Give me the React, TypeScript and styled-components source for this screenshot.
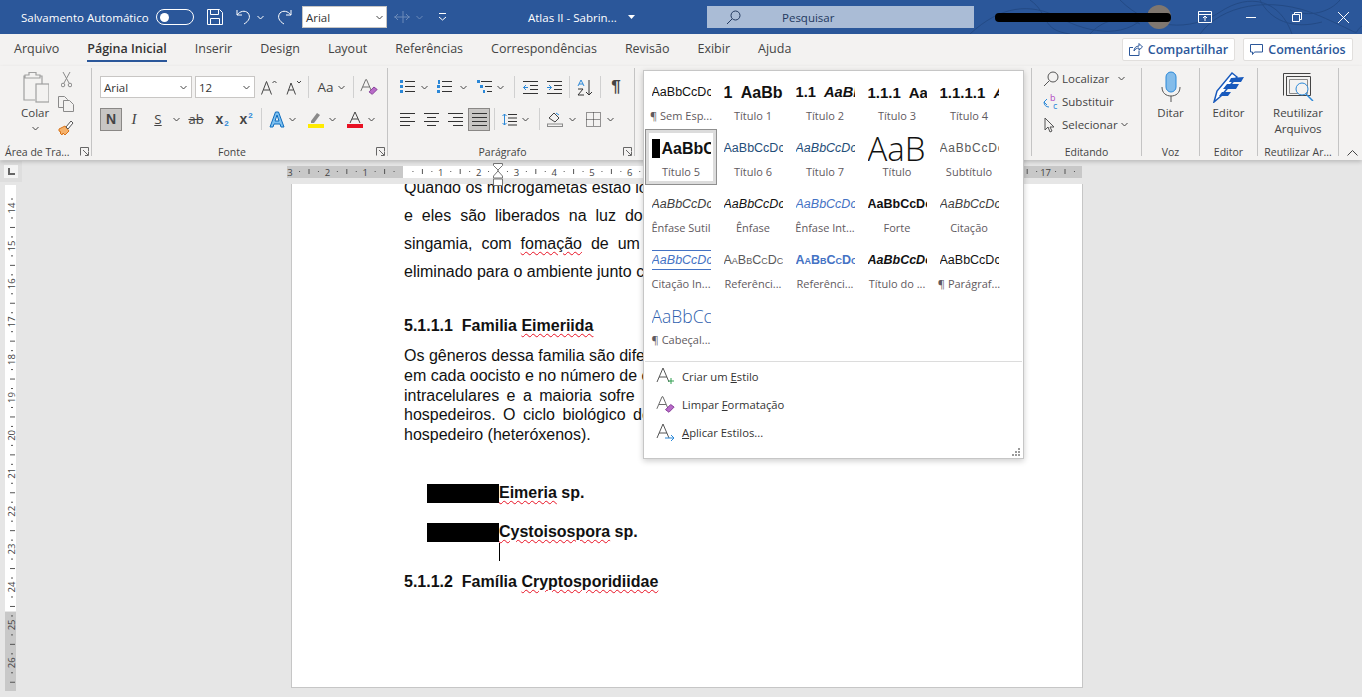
import React from 'react'
import styled, { createGlobalStyle } from 'styled-components'

const UI = `"Open Sans", "Noto Sans", sans-serif`
const DOC = `"Liberation Sans", Arial, sans-serif`

const Global = createGlobalStyle`
  html, body { margin: 0; padding: 0; height: 100%; overflow: hidden; }
  body { background: #e6e6e6; font-family: ${UI}; }
  * { box-sizing: border-box; }
  svg { display: block; flex: none; }
`

const Shell = styled.div`
  position: relative;
  width: 1362px;
  height: 697px;
  overflow: hidden;
  display: flex;
  flex-direction: column;
`

/* title bar */
const TitleBar = styled.header`
  position: relative;
  height: 34px;
  flex: none;
  background: #2b579a;
  color: #fff;
  display: flex;
  align-items: center;
  padding-left: 21px;
  font-size: 11.5px;
  overflow: hidden;
`
const Swirls = styled.svg`
  position: absolute;
  right: 0;
  top: 0;
`
const AutoSave = styled.span`
  width: 135px;
  white-space: nowrap;
  position: relative;
`
const Toggle = styled.span`
  width: 38px;
  height: 16px;
  border: 1.5px solid #fff;
  border-radius: 8px;
  display: flex;
  align-items: center;
  padding-left: 3px;
  margin-right: 13px;
  &::before {
    content: '';
    width: 9px;
    height: 9px;
    border-radius: 50%;
    background: #fff;
  }
`
const QuickBtn = styled.span<{ $w: number; $ml?: number; $faded?: boolean }>`
  width: ${p => p.$w}px;
  height: 20px;
  flex: none;
  margin-left: ${p => p.$ml || 0}px;
  display: flex;
  align-items: center;
  justify-content: center;
  opacity: ${p => (p.$faded ? 0.3 : 1)};
`
const FontBox = styled.div`
  width: 85px;
  height: 22px;
  background: #fff;
  border: 1px solid #c8c6c4;
  color: #333;
  display: flex;
  align-items: center;
  justify-content: space-between;
  padding: 0 3px;
  font-size: 11.5px;
  margin: 0 6px 0 10px;
`
const DocTitle = styled.div`
  width: 179px;
  margin-left: 68px;
  display: flex;
  align-items: center;
  gap: 11px;
  white-space: nowrap;
  position: relative;
`
const SearchBox = styled.div`
  width: 267px;
  height: 22px;
  background: #aabcd6;
  color: #23395f;
  display: flex;
  align-items: center;
  padding-left: 19px;
  gap: 41px;
  font-size: 11.5px;
  position: relative;
`
const AccountBar = styled.div`
  position: relative;
  width: 176px;
  height: 9px;
  margin-left: 21px;
  flex: none;
  &::after {
    content: '';
    position: absolute;
    inset: 0;
    background: #000;
    border-radius: 4px;
  }
`
const Avatar = styled.span`
  position: absolute;
  right: 0;
  top: -8px;
  width: 24px;
  height: 24px;
  border-radius: 50%;
  background: #7f7770;
`
const WindowBtns = styled.div`
  margin-left: auto;
  margin-right: -4px;
  display: flex;
  align-items: center;
  position: relative;
`
const WindowBtn = styled.span`
  width: 46px;
  height: 34px;
  display: flex;
  align-items: center;
  justify-content: center;
`

/* tab row */
const TabRow = styled.nav`
  height: 32px;
  flex: none;
  background: #f3f2f1;
  display: flex;
  align-items: center;
  padding: 0 9px 2px 14px;
  font-size: 12.5px;
  color: #444;
`
const Tabs = styled.div`
  display: flex;
  gap: 28px;
  align-items: center;
  height: 100%;
`
const Tab = styled.span<{ $active?: boolean }>`
  position: relative;
  height: 18px;
  line-height: 18px;
  white-space: nowrap;
  font-weight: ${p => (p.$active ? 600 : 400)};
  color: ${p => (p.$active ? '#333' : '#444')};
  ${p =>
    p.$active &&
    `&::after {
      content: '';
      position: absolute;
      left: 0;
      right: 0;
      bottom: -4px;
      height: 2px;
      background: #2b579a;
    }`}
`
const TabActions = styled.div`
  margin-left: auto;
  display: flex;
  gap: 8px;
`
const ActionBtn = styled.span<{ $w: number }>`
  width: ${p => p.$w}px;
  height: 23px;
  background: #fff;
  border: 1px solid #e1dfdd;
  border-radius: 2px;
  color: #2b579a;
  font-weight: 600;
  display: flex;
  align-items: center;
  justify-content: center;
  gap: 5px;
  font-size: 12.5px;
`

/* ribbon */
const Ribbon = styled.section`
  height: 94px;
  flex: none;
  background: #f3f2f1;
  display: flex;
  padding-top: 2px;
  position: relative;
  z-index: 2;
  box-shadow: 0 2px 4px rgba(0, 0, 0, 0.18);
`
const Group = styled.div<{ $w: number }>`
  width: ${p => p.$w}px;
  flex: none;
  height: 88px;
  border-right: 1px solid #c4c4c4;
  display: flex;
  flex-direction: column;
  position: relative;
`
const GroupBody = styled.div`
  flex: 1;
  display: flex;
  min-height: 0;
`
const GroupLabel = styled.div<{ $pr?: number; $left?: boolean }>`
  height: 16px;
  margin-bottom: -4px;
  padding-right: ${p => p.$pr || 0}px;
  padding-left: ${p => (p.$left ? 5 : 0)}px;
  font-size: 10.5px;
  line-height: 16px;
  text-align: ${p => (p.$left ? 'left' : 'center')};
  color: #444;
  white-space: nowrap;
`
const Launcher = styled.span`
  position: absolute;
  right: 2px;
  bottom: 0;
`
const ToolColumn = styled.div<{ $pad?: string; $gap?: number }>`
  display: flex;
  flex-direction: column;
  padding: ${p => p.$pad || '0'};
  gap: ${p => p.$gap || 0}px;
`
const EditColumn = styled(ToolColumn)`
  margin-top: -1px;
`
const ToolRow = styled.div<{ $gap?: number; $h?: number }>`
  display: flex;
  align-items: center;
  gap: ${p => p.$gap || 0}px;
  height: ${p => p.$h || 24}px;
`
const Combo = styled.span<{ $w: number }>`
  width: ${p => p.$w}px;
  height: 22px;
  background: #fff;
  border: 1px solid #c8c6c4;
  display: flex;
  align-items: center;
  justify-content: space-between;
  padding: 0 4px 0 3px;
  font-size: 11.5px;
  color: #333;
`
const ToolBtn = styled.span<{ $w?: number; $ml?: number; $gap?: number; $pressed?: boolean }>`
  width: ${p => p.$w || 20}px;
  height: 23px;
  margin-left: ${p => p.$ml || 0}px;
  flex: none;
  display: flex;
  align-items: center;
  justify-content: center;
  gap: ${p => p.$gap || 0}px;
  font-size: 13.5px;
  color: #444;
  ${p => p.$pressed && 'background: #c8c6c4; border: 1px solid #8a8886;'}
`
const BoldBtn = styled(ToolBtn)`
  font-family: ${DOC};
  font-weight: 700;
  font-size: 14px;
`
const ItalicBtn = styled(ToolBtn)`
  font-family: "Liberation Serif", serif;
  font-style: italic;
  font-size: 15px;
`
const UnderBtn = styled(ToolBtn)`
  text-decoration: underline;
`
const StrikeBtn = styled(ToolBtn)`
  text-decoration: line-through;
  font-size: 13px;
`
const ScriptMark = styled.span<{ $up?: boolean }>`
  font-size: 8px;
  color: #2b88d8;
  font-weight: 700;
  align-self: ${p => (p.$up ? 'flex-start' : 'flex-end')};
  margin: ${p => (p.$up ? '3px' : '0')} 0 ${p => (p.$up ? '0' : '3px')} 1px;
`
const PilcrowBtn = styled(ToolBtn)`
  font-size: 17px;
  font-weight: 700;
  font-family: ${DOC};
`
const Divider = styled.span<{ $ml?: number }>`
  width: 1px;
  height: 22px;
  margin-left: ${p => p.$ml || 0}px;
  background: #d0d0d0;
  flex: none;
`
const BigTool = styled.div`
  flex: 1;
  display: flex;
  flex-direction: column;
  align-items: center;
  font-size: 11.5px;
  line-height: 16px;
  color: #444;
  padding-top: 1px;
  text-align: center;
  white-space: nowrap;
`
const PasteTool = styled(BigTool)`
  flex: none;
  padding-top: 0;
`
const ChevSlot = styled.span`
  margin-top: 5px;
`
const BigIcon = styled.span`
  height: 35px;
  margin-bottom: 1px;
  display: flex;
  align-items: center;
  justify-content: center;
`
const EditLine = styled.div`
  height: 23px;
  display: flex;
  align-items: center;
  gap: 3px;
  font-size: 11.5px;
  color: #444;
  white-space: nowrap;
`
const FindText = styled.span`
  width: 53px;
`
const Collapse = styled.span`
  position: absolute;
  right: 4px;
  bottom: 4px;
`

/* workspace */
const Workspace = styled.div`
  flex: 1;
  min-height: 0;
  background: #e6e6e6;
  display: flex;
  flex-direction: column;
  position: relative;
`
const RulerRow = styled.div`
  height: 24px;
  flex: none;
  display: flex;
  align-items: center;
  position: relative;
  padding-left: 287px;
`
const TabStop = styled.span`
  position: absolute;
  left: 0;
  top: 1px;
  width: 22px;
  height: 21px;
  background: #dedede;
  display: flex;
  align-items: center;
  justify-content: center;
  &::before {
    content: '';
    width: 14px;
    height: 13px;
    background: #f4f4f4;
    position: absolute;
  }
`
const TabGlyph = styled.svg`
  position: relative;
`
const Indent = styled.svg`
  position: absolute;
  left: 493px;
  top: 3px;
`
const DeskRow = styled.div`
  flex: 1;
  min-height: 0;
  display: flex;
  padding-bottom: 9px;
`
const SideRuler = styled.div`
  width: 291px;
  flex: none;
  padding-left: 5px;
`
const Page = styled.main`
  width: 792px;
  height: 504px;
  flex: none;
  background: #fff;
  border: 1px solid #c6c6c6;
  border-top: none;
  overflow: hidden;
  padding: 0 112px;
  font-family: ${DOC};
  font-size: 16px;
  color: #111;
`
const Para = styled.div<{ $lh: number; $top?: number }>`
  line-height: ${p => p.$lh}px;
  margin-top: ${p => p.$top || 0}px;
  white-space: nowrap;
`
const Line = styled.div<{ $ws?: number }>`
  word-spacing: ${p => p.$ws || 0}px;
`
const Heading = styled.div<{ $top: number }>`
  font-weight: 700;
  margin-top: ${p => p.$top}px;
  line-height: 20px;
  white-space: pre;
`
const Typo = styled.span`
  text-decoration: underline wavy #e81123 1px;
  text-underline-offset: 2px;
`
const ListItem = styled.div<{ $top: number }>`
  display: flex;
  align-items: center;
  margin: ${p => p.$top}px 0 0 23px;
  font-weight: 700;
  height: 19px;
  white-space: pre;
`
const Redact = styled.span`
  width: 72px;
  height: 19px;
  background: #000;
  flex: none;
`
const Caret = styled.div`
  width: 1px;
  height: 18px;
  margin: 1px 0 0 95px;
  background: #000;
`

/* style gallery */
const Gallery = styled.div`
  position: absolute;
  left: 643px;
  top: 70px;
  width: 381px;
  height: 389px;
  background: #fff;
  border: 1px solid #c6c6c6;
  box-shadow: 0 2px 6px rgba(0, 0, 0, 0.2);
  z-index: 5;
  display: flex;
  flex-direction: column;
`
const StyleGrid = styled.div`
  display: grid;
  grid-template-columns: repeat(5, 72px);
  grid-auto-rows: 56px;
  padding: 2px 0 0 1px;
  height: 290px;
`
const StyleCell = styled.div<{ $selected?: boolean }>`
  display: flex;
  flex-direction: column;
  align-items: center;
  padding: 5px 6px 0;
  overflow: hidden;
  ${p => p.$selected && 'outline: 1px solid #8f8f8f; outline-offset: -1px; border: 4px solid #dcdcdc; padding: 1px 2px 0;'}
`
type PreviewProps = {
  $size?: number
  $bold?: boolean
  $italic?: boolean
  $color?: string
  $ws?: number
  $lines?: boolean
  $caps?: boolean
  $thin?: boolean
  $clip?: number
}
const Preview = styled.div<PreviewProps>`
  width: 59px;
  height: 29px;
  overflow: hidden;
  white-space: pre;
  font-family: ${p => (p.$thin ? UI : DOC)};
  font-size: ${p => p.$size || 12.5}px;
  font-weight: ${p => (p.$bold ? 700 : p.$thin ? 300 : 400)};
  font-style: ${p => (p.$italic ? 'italic' : 'normal')};
  font-variant: ${p => (p.$caps ? 'small-caps' : 'normal')};
  color: ${p => p.$color || '#111'};
  line-height: 29px;
  flex: none;
  letter-spacing: ${p => p.$ws || 0}px;
  display: flex;
  align-items: center;
  ${p => p.$clip && `clip-path: inset(${p.$clip}px 0 0 0);`}
  ${p =>
    p.$lines &&
    `box-shadow: inset 0 1px 0 #4472c4, inset 0 -1px 0 #4472c4; height: 20px; margin: 4px 0 5px; line-height: 20px;`}
`
const Slant = styled.span`
  font-style: italic;
`
const HeadMark = styled.span`
  width: 8px;
  height: 19px;
  background: #000;
  margin-right: 2px;
  flex: none;
`
const Caption = styled.div`
  font-size: 11px;
  line-height: 16px;
  height: 16px;
  margin-top: 1px;
  color: #5f5a60;
  white-space: nowrap;
  text-align: center;
`
const MenuItems = styled.div`
  border-top: 1px solid #dcdcdc;
  margin: 0 1px;
  flex: 1;
  position: relative;
`
const MenuItem = styled.div`
  height: 28px;
  display: flex;
  align-items: center;
  padding-left: 11px;
  gap: 7px;
  font-size: 11.25px;
  color: #333;
  u {
    text-underline-offset: 1px;
  }
`
const Grip = styled.svg`
  position: absolute;
  right: 2px;
  bottom: 2px;
`

/* icons */
const Chev = ({ c = '#444' }: { c?: string }) => (
  <svg width="7" height="5" viewBox="0 0 7 5">
    <path d="M.5 1l3 3 3-3" fill="none" stroke={c} strokeWidth="1" />
  </svg>
)
const LaunchIcon = () => (
  <svg width="9" height="9" viewBox="0 0 9 9" fill="none" stroke="#666">
    <path d="M.5 8.500v-8h8v4M3 3l5 5M5 8.500h3.500V5" />
  </svg>
)
const AlignIcon = ({ rows }: { rows: [number, number][] }) => (
  <svg width="15" height="16" viewBox="0 0 15 16">
    {rows.map(([x, w], i) => (
      <path key={i} d={`M${x} ${2.5 + i * 4}h${w}`} stroke="#333" fill="none" />
    ))}
  </svg>
)
const EraserA = ({ s = 22 }: { s?: number }) => (
  <svg width={s} height={s} viewBox="0 0 22 22" fill="none">
    <path d="M1 16L7 2h1l6 14M3.500 11h8" stroke="#555" />
    <path d="M11 17l6-6 4 3-6 6z" fill="#b86bc8" stroke="#7b2f8e" />
  </svg>
)

const styles: { name: string; text: React.ReactNode; p?: PreviewProps; mark?: boolean }[] = [
  { name: '¶ Sem Esp...', text: 'AaBbCcDc' },
  { name: 'Título 1', text: '1  AaBb', p: { $bold: true, $size: 16 } },
  { name: 'Título 2', text: <>1.1  <Slant>AaBb</Slant></>, p: { $bold: true, $size: 14.67 } },
  { name: 'Título 3', text: '1.1.1  AaBb', p: { $bold: true, $size: 15 } },
  { name: 'Título 4', text: <>1.1.1.1  <Slant>AaBb</Slant></>, p: { $bold: true, $size: 15 } },
  { name: 'Título 5', text: 'AaBbCcDc', p: { $bold: true, $size: 16 }, mark: true },
  { name: 'Título 6', text: 'AaBbCcDc', p: { $color: '#1f4e79' } },
  { name: 'Título 7', text: 'AaBbCcDc', p: { $italic: true, $color: '#1f4e79' } },
  { name: 'Título', text: 'AaB', p: { $thin: true, $size: 33, $clip: 2 } },
  { name: 'Subtítulo', text: 'AaBbCcDc', p: { $color: '#595959', $ws: 0.8, $size: 12 } },
  { name: 'Ênfase Sutil', text: 'AaBbCcDc', p: { $italic: true, $color: '#404040' } },
  { name: 'Ênfase', text: 'AaBbCcDc', p: { $italic: true } },
  { name: 'Ênfase Int...', text: 'AaBbCcDc', p: { $italic: true, $color: '#4472c4' } },
  { name: 'Forte', text: 'AaBbCcDc', p: { $bold: true } },
  { name: 'Citação', text: 'AaBbCcDc', p: { $italic: true, $color: '#404040' } },
  { name: 'Citação In...', text: 'AaBbCcDc', p: { $italic: true, $color: '#4472c4', $lines: true } },
  { name: 'Referênci...', text: 'AaBbCcDc', p: { $color: '#595959', $caps: true } },
  { name: 'Referênci...', text: 'AaBbCcDc', p: { $color: '#4472c4', $bold: true, $caps: true } },
  { name: 'Título do ...', text: 'AaBbCcDc', p: { $bold: true, $italic: true } },
  { name: '¶ Parágraf...', text: 'AaBbCcDc' },
  { name: '¶ Cabeçal...', text: 'AaBbCc', p: { $thin: true, $size: 17.5, $color: '#2f5fae' } },
]

const HRuler = () => {
  const unit = 37.8
  const zero = 116
  const marks: React.ReactNode[] = []
  for (let n = -3; n <= 17; n++) {
    const x = zero + n * unit
    if (n !== 0) {
      marks.push(
        <text key={`t${n}`} x={Math.max(x, 3)} y={9.5} fontSize="9.5" textAnchor="middle" fill="#444" fontFamily={UI}>
          {Math.abs(n)}
        </text>,
      )
    }
    marks.push(<rect key={`a${n}`} x={x + unit / 4} y={5} width={1} height={1} fill="#555" />)
    marks.push(<rect key={`b${n}`} x={x + unit / 2} y={3} width={1} height={5} fill="#555" />)
    marks.push(<rect key={`c${n}`} x={x + (3 * unit) / 4} y={5} width={1} height={1} fill="#555" />)
  }
  return (
    <svg width="795" height="12" viewBox="0 0 795 12">
      <rect width="795" height="12" fill="#c8c8c8" />
      <rect x="116" width="605" height="12" fill="#fff" />
      {marks}
    </svg>
  )
}

const VRuler = () => {
  const unit = 37.9
  const y14 = 24
  const marks: React.ReactNode[] = []
  for (let n = 14; n <= 26; n++) {
    const y = y14 + (n - 14) * unit
    marks.push(
      <text
        key={`t${n}`}
        x={0}
        y={0}
        transform={`translate(10 ${y}) rotate(-90)`}
        fontSize="9.5"
        textAnchor="middle"
        fill="#444"
        fontFamily={UI}
      >
        {n}
      </text>,
    )
    marks.push(<rect key={`z${n}`} x={6} y={y - unit / 4} width={2} height={1} fill="#555" />)
    marks.push(<rect key={`a${n}`} x={6} y={y + unit / 4} width={2} height={1} fill="#555" />)
    marks.push(<rect key={`b${n}`} x={5} y={y + unit / 2} width={5} height={1} fill="#555" />)
  }
  return (
    <svg width="11" height="507" viewBox="0 0 11 507">
      <rect y="428" width="11" height="79" fill="#c8c8c8" />
      <rect y="1" width="11" height="426" fill="#fff" />
      {marks}
    </svg>
  )
}

export default function App() {
  return (
    <Shell>
      <Global />
      <TitleBar>
        <Swirls width="402" height="34" viewBox="0 0 402 34" fill="none" stroke="#234a85" strokeWidth="1">
          <path d="M10 34C40 6 70 2 100 18s70 22 90-8M70 0c20 14 10 30 40 34M160 0c30 30 70 32 100 12s60-12 72 22M240 34c20-28 70-40 120-18s30 18 42 10M300 0c10 20 32 30 62 22M380 0c-10 12-30 18-50 10M130 34c10-12 30-20 50-10" />
        </Swirls>
        <AutoSave>Salvamento Automático</AutoSave>
        <Toggle />
        <QuickBtn $w={16}>
          <svg width="16" height="16" viewBox="0 0 16 16" fill="none" stroke="#fff">
            <path d="M.5.500h12l3 3v12H.5zM3.500.500v5h8v-5M3.500 15.500v-6h9v6" />
          </svg>
        </QuickBtn>
        <QuickBtn $w={16} $ml={13}>
          <svg width="16" height="16" viewBox="0 0 16 16" fill="none" stroke="#fff">
            <path d="M1 1v5h5M1 6c3-4 8-5 11-2 3 4 1 8-4 11" />
          </svg>
        </QuickBtn>
        <QuickBtn $w={17}>
          <Chev c="#fff" />
        </QuickBtn>
        <QuickBtn $w={16} $ml={7}>
          <svg width="16" height="16" viewBox="0 0 16 16" fill="none" stroke="#fff">
            <path d="M15 1v5h-5M15 6c-3-4-8-5-11-2-3 4-1 8 4 11" />
          </svg>
        </QuickBtn>
        <FontBox>
          Arial
          <Chev />
        </FontBox>
        <QuickBtn $w={20} $faded>
          <svg width="18" height="12" viewBox="0 0 18 12" fill="none" stroke="#fff">
            <path d="M0 6h16M4 3L1 6l3 3M12 3l3 3-3 3M9 0v12" />
          </svg>
        </QuickBtn>
        <QuickBtn $w={12} $faded>
          <Chev c="#fff" />
        </QuickBtn>
        <QuickBtn $w={35}>
          <svg width="9" height="8" viewBox="0 0 9 8" fill="none" stroke="#fff">
            <path d="M1 .5h7M1 4l3.500 3L8 4" />
          </svg>
        </QuickBtn>
        <DocTitle>
          Atlas II - Sabrin...
          <svg width="7" height="4" viewBox="0 0 7 4">
            <path d="M0 0h7L3.500 4z" fill="#fff" />
          </svg>
        </DocTitle>
        <SearchBox>
          <svg width="15" height="15" viewBox="0 0 15 15" fill="none" stroke="#23395f">
            <circle cx="9.500" cy="5.500" r="4.500" />
            <path d="M6 9l-5 5" />
          </svg>
          Pesquisar
        </SearchBox>
        <AccountBar>
          <Avatar />
        </AccountBar>
        <WindowBtns>
          <WindowBtn>
            <svg width="14" height="12" viewBox="0 0 14 12" fill="none" stroke="#fff">
              <path d="M.5.500h13v11H.5zM.5 3.500h13M7 10V5M5 7l2-2 2 2" />
            </svg>
          </WindowBtn>
          <WindowBtn>
            <svg width="10" height="1" viewBox="0 0 10 1">
              <rect width="10" height="1" fill="#fff" />
            </svg>
          </WindowBtn>
          <WindowBtn>
            <svg width="10" height="10" viewBox="0 0 10 10" fill="none" stroke="#fff">
              <path d="M.5 2.500h7v7h-7zM2.500 2.500v-2h7v7h-2" />
            </svg>
          </WindowBtn>
          <WindowBtn>
            <svg width="11" height="11" viewBox="0 0 11 11" stroke="#fff">
              <path d="M0 0l11 11M11 0L0 11" />
            </svg>
          </WindowBtn>
        </WindowBtns>
      </TitleBar>

      <TabRow>
        <Tabs>
          <Tab>Arquivo</Tab>
          <Tab $active>Página Inicial</Tab>
          <Tab>Inserir</Tab>
          <Tab>Design</Tab>
          <Tab>Layout</Tab>
          <Tab>Referências</Tab>
          <Tab>Correspondências</Tab>
          <Tab>Revisão</Tab>
          <Tab>Exibir</Tab>
          <Tab>Ajuda</Tab>
        </Tabs>
        <TabActions>
          <ActionBtn $w={113}>
            <svg width="14" height="14" viewBox="0 0 14 14" fill="none" stroke="#2b579a">
              <path d="M10 8.500v5H.5v-8H4M5 9c0-3 2-5 5-5V1.500l3.500 3.500L10 8V6C8 6 6 7 5 9z" />
            </svg>
            Compartilhar
          </ActionBtn>
          <ActionBtn $w={110}>
            <svg width="13" height="13" viewBox="0 0 13 13" fill="none" stroke="#2b579a">
              <path d="M.5 1.500h12v7.500h-8l-2 2.500V9h-2z" />
            </svg>
            Comentários
          </ActionBtn>
        </TabActions>
      </TabRow>

      <Ribbon>
        <Group $w={92}>
          <GroupBody>
            <ToolColumn $pad="1px 0 0 21px">
              <BigIcon>
                <svg width="28" height="32" viewBox="0 0 28 32" fill="none" stroke="#a0a0a0" strokeWidth="1.200">
                  <path d="M8 4V1.500h7V4h4v3H4V4zM4 5H3v24h11" />
                  <path d="M19 5h2v8" />
                  <rect x="15" y="13" width="13" height="18" fill="#f3f2f1" />
                </svg>
              </BigIcon>
              <PasteTool>
                Colar
                <ChevSlot>
                  <Chev />
                </ChevSlot>
              </PasteTool>
            </ToolColumn>
            <ToolColumn $pad="0 0 0 9px" $gap={1}>
              <ToolBtn $w={16}>
                <svg width="11" height="16" viewBox="0 0 11 16" fill="none" stroke="#8a8a8a">
                  <path d="M2 0l6 11M9 0L3 11" />
                  <circle cx="2" cy="13" r="1.800" />
                  <circle cx="9" cy="13" r="1.800" />
                </svg>
              </ToolBtn>
              <ToolBtn $w={16}>
                <svg width="16" height="16" viewBox="0 0 16 16" fill="none" stroke="#8a8a8a">
                  <path d="M5 11.500H.5V.5h6l3 3v1M5.500 4.500h6l4 4v7h-10z" />
                </svg>
              </ToolBtn>
              <ToolBtn $w={16}>
                <svg width="16" height="16" viewBox="0 0 16 16" fill="none">
                  <path d="M1 9l6-3 4 5-4 4-2-2-1 2-2-2 1-1-2-1z" fill="#f6b26b" stroke="#d9741a" />
                  <path d="M8 7l5-6 2 2-5 6z" fill="#fff" stroke="#555" />
                </svg>
              </ToolBtn>
            </ToolColumn>
          </GroupBody>
          <GroupLabel $left>Área de Tra...</GroupLabel>
          <Launcher>
            <LaunchIcon />
          </Launcher>
        </Group>

        <Group $w={296}>
          <GroupBody>
            <ToolColumn $pad="7px 0 0 8px" $gap={8}>
              <ToolRow $gap={3}>
                <Combo $w={92}>
                  Arial
                  <Chev />
                </Combo>
                <Combo $w={60}>
                  12
                  <Chev />
                </Combo>
                <ToolBtn $w={22}>
                  <svg width="16" height="15" viewBox="0 0 16 15" fill="none" stroke="#444">
                    <path d="M.5 14.500L5.500 1.500l5 13M2.500 10h6M11.500 3l2-2 2 2" />
                  </svg>
                </ToolBtn>
                <ToolBtn $w={22}>
                  <svg width="16" height="15" viewBox="0 0 16 15" fill="none" stroke="#444">
                    <path d="M1 14.500L5 3l4.500 11.500M2.500 10h5M11 1l2 2 2-2" />
                  </svg>
                </ToolBtn>
                <Divider />
                <ToolBtn $w={38} $gap={4}>
                  Aa
                  <Chev />
                </ToolBtn>
                <Divider />
                <ToolBtn $w={24}>
                  <EraserA s={18} />
                </ToolBtn>
              </ToolRow>
              <ToolRow>
                <BoldBtn $w={22} $pressed>
                  N
                </BoldBtn>
                <ItalicBtn $w={24}>I</ItalicBtn>
                <UnderBtn $w={24}>S</UnderBtn>
                <ToolBtn $w={12}>
                  <Chev />
                </ToolBtn>
                <StrikeBtn $w={28}>ab</StrikeBtn>
                <BoldBtn $w={24}>
                  x
                  <ScriptMark>2</ScriptMark>
                </BoldBtn>
                <BoldBtn $w={24}>
                  x
                  <ScriptMark $up>2</ScriptMark>
                </BoldBtn>
                <Divider $ml={3} />
                <ToolBtn $w={40} $gap={4}>
                  <svg width="16" height="17" viewBox="0 0 16 17">
                    <path d="M1 16L6.500 1h3L15 16h-3l-1-3H5l-1 3zM6 10h4L8 4z" fill="#7cc0f0" stroke="#0f6cbd" />
                  </svg>
                  <Chev />
                </ToolBtn>
                <ToolBtn $w={40} $gap={5}>
                  <svg width="16" height="17" viewBox="0 0 16 17">
                    <path d="M3 10l6-8 3 2-6 8H3z" fill="#8a8a8a" />
                    <rect y="13" width="16" height="4" fill="#ffeb00" />
                  </svg>
                  <Chev />
                </ToolBtn>
                <ToolBtn $w={38} $gap={5}>
                  <svg width="16" height="17" viewBox="0 0 16 17" fill="none">
                    <path d="M3 12L8 1l5 11M5 8h6" stroke="#444" />
                    <rect y="13" width="16" height="4" fill="#e81123" />
                  </svg>
                  <Chev />
                </ToolBtn>
              </ToolRow>
            </ToolColumn>
          </GroupBody>
          <GroupLabel $pr={15}>Fonte</GroupLabel>
          <Launcher>
            <LaunchIcon />
          </Launcher>
        </Group>

        <Group $w={247}>
          <GroupBody>
            <ToolColumn $pad="7px 0 0 9px" $gap={8}>
              <ToolRow>
                <ToolBtn $w={33} $gap={6}>
                  <svg width="15" height="14" viewBox="0 0 15 14">
                    <path d="M0 0h3v3H0zM0 5h3v3H0zM0 10h3v3H0z" fill="#2b88d8" />
                    <path d="M5 1.500h10M5 6.500h10M5 11.500h10" stroke="#333" />
                  </svg>
                  <Chev />
                </ToolBtn>
                <ToolBtn $w={43} $gap={8}>
                  <svg width="15" height="14" viewBox="0 0 15 14">
                    <path d="M1 0h2v4H1zM0 5h3v3H0zM0 10h3v3H0z" fill="#2b88d8" />
                    <path d="M5 1.500h10M5 6.500h10M5 11.500h10" stroke="#333" />
                  </svg>
                  <Chev />
                </ToolBtn>
                <ToolBtn $w={34} $gap={5}>
                  <svg width="15" height="14" viewBox="0 0 15 14">
                    <path d="M0 0h3v3H0zM3 5h3v3H3zM6 10h2v3H6z" fill="#2b88d8" />
                    <path d="M4 1.500h11M8 6.500h7M10 11.500h5" stroke="#333" />
                  </svg>
                  <Chev />
                </ToolBtn>
                <Divider $ml={7} />
                <ToolBtn $w={30}>
                  <svg width="15" height="14" viewBox="0 0 15 14" fill="none">
                    <path d="M0 1.500h15M7 5.500h8M7 9.500h8M0 13.500h15" stroke="#333" />
                    <path d="M5 7.500H.5M3 5L.5 7.500 3 10" stroke="#2b88d8" />
                  </svg>
                </ToolBtn>
                <ToolBtn $w={18}>
                  <svg width="15" height="14" viewBox="0 0 15 14" fill="none">
                    <path d="M0 1.500h15M7 5.500h8M7 9.500h8M0 13.500h15" stroke="#333" />
                    <path d="M0 7.500h4.500M2 5l2.500 2.500L2 10" stroke="#2b88d8" />
                  </svg>
                </ToolBtn>
                <Divider $ml={6} />
                <ToolBtn $w={30}>
                  <svg width="17" height="17" viewBox="0 0 17 17" fill="none">
                    <path d="M1 7l3-6 3 6M2 5h4" stroke="#2b88d8" />
                    <path d="M1 10h5l-5 6h6" stroke="#333" />
                    <path d="M12 1v15M9 13l3 3 3-3" stroke="#333" />
                  </svg>
                </ToolBtn>
                <Divider />
                <PilcrowBtn $w={30}>¶</PilcrowBtn>
              </ToolRow>
              <ToolRow>
                <ToolBtn $w={20}>
                  <AlignIcon rows={[[0, 15], [0, 10], [0, 15], [0, 10]]} />
                </ToolBtn>
                <ToolBtn $w={28}>
                  <AlignIcon rows={[[0, 15], [3, 9], [0, 15], [3, 9]]} />
                </ToolBtn>
                <ToolBtn $w={20}>
                  <AlignIcon rows={[[0, 15], [5, 10], [0, 15], [5, 10]]} />
                </ToolBtn>
                <ToolBtn $w={22} $ml={3} $pressed>
                  <AlignIcon rows={[[0, 15], [0, 15], [0, 15], [0, 15]]} />
                </ToolBtn>
                <Divider $ml={4} />
                <ToolBtn $w={40} $gap={5}>
                  <svg width="15" height="15" viewBox="0 0 15 15" fill="none">
                    <path d="M2.500 2v11M.5 4l2-2 2 2M.5 11l2 2 2-2" stroke="#2b88d8" />
                    <path d="M6 2.500h9M6 6h9M6 9.500h9M6 13h9" stroke="#333" />
                  </svg>
                  <Chev />
                </ToolBtn>
                <Divider $ml={4} />
                <ToolBtn $w={42} $gap={6}>
                  <svg width="16" height="16" viewBox="0 0 16 16" fill="none">
                    <path d="M2 7l5-5 5 5-4 4z" stroke="#444" />
                    <path d="M9 2l3 2" stroke="#2b88d8" />
                    <rect x=".5" y="13" width="15" height="2.500" stroke="#8a8a8a" />
                  </svg>
                  <Chev />
                </ToolBtn>
                <ToolBtn $w={36} $gap={6}>
                  <svg width="15" height="15" viewBox="0 0 15 15" fill="none" stroke="#333" strokeDasharray="1 1">
                    <path d="M.5.500h14v14H.5zM7.500.500v14M.5 7.500h14" />
                  </svg>
                  <Chev />
                </ToolBtn>
              </ToolRow>
            </ToolColumn>
          </GroupBody>
          <GroupLabel $pr={17}>Parágrafo</GroupLabel>
          <Launcher>
            <LaunchIcon />
          </Launcher>
        </Group>

        <Group $w={397} />

        <Group $w={110}>
          <GroupBody>
            <EditColumn $pad="0 0 0 11px">
              <EditLine>
                <svg width="16" height="16" viewBox="0 0 16 16" fill="none" stroke="#555">
                  <circle cx="10" cy="6" r="5" />
                  <path d="M6 10l-5 5" />
                </svg>
                <FindText>Localizar</FindText>
                <Chev />
              </EditLine>
              <EditLine>
                <svg width="16" height="16" viewBox="0 0 16 16" fill="none">
                  <path d="M4 5L1 8l3 3M1 8c0 3 2 5 5 5" stroke="#2b88d8" />
                  <text x="7" y="7" fontSize="9" fill="#b146c2" fontFamily={UI}>b</text>
                  <text x="10" y="15" fontSize="9" fill="#2b88d8" fontFamily={UI}>c</text>
                </svg>
                Substituir
              </EditLine>
              <EditLine>
                <svg width="16" height="16" viewBox="0 0 16 16" fill="none" stroke="#555">
                  <path d="M2 1v12l3-3 2 5 2-1-2-4h4z" />
                </svg>
                Selecionar
                <Chev />
              </EditLine>
            </EditColumn>
          </GroupBody>
          <GroupLabel>Editando</GroupLabel>
        </Group>

        <Group $w={58}>
          <BigTool>
            <BigIcon>
              <svg width="20" height="32" viewBox="0 0 20 32" fill="none">
                <rect x="5" y="1" width="10" height="20" rx="5" fill="#83bcea" stroke="#2b88d8" />
                <path d="M1 16c0 6 4 9 9 9s9-3 9-9M10 25v6" stroke="#555" />
              </svg>
            </BigIcon>
            Ditar
          </BigTool>
          <GroupLabel>Voz</GroupLabel>
        </Group>

        <Group $w={58}>
          <BigTool>
            <BigIcon>
              <svg width="32" height="32" viewBox="0 0 32 32">
                <path d="M1 31l3-11L19 2l5 4L8 25z" fill="#fff" stroke="#185abd" strokeWidth="1.500" />
                <path d="M18 7l13-1-3 5H16zM14 13h12l-3 5H10zM9 21h9l-3 4H6z" fill="#185abd" />
              </svg>
            </BigIcon>
            Editor
          </BigTool>
          <GroupLabel>Editor</GroupLabel>
        </Group>

        <Group $w={81}>
          <BigTool>
            <BigIcon>
              <svg width="31" height="28" viewBox="0 0 31 28" fill="none">
                <path d="M.5.500h27M.5.500v22M3.500 3.500h24v19h-24z" stroke="#444" />
                <path d="M6.500 6.500h18v14h-18z" stroke="#8a8a8a" />
                <circle cx="19" cy="16" r="6" fill="#f3f2f1" stroke="#2b88d8" />
                <path d="M23 21l7 7" stroke="#2b88d8" strokeWidth="1.500" />
              </svg>
            </BigIcon>
            Reutilizar
            <br />
            Arquivos
          </BigTool>
          <GroupLabel>Reutilizar Ar...</GroupLabel>
        </Group>

        <Collapse>
          <svg width="11" height="6" viewBox="0 0 11 6" fill="none" stroke="#444">
            <path d="M.5 5.500l5-5 5 5" />
          </svg>
        </Collapse>
      </Ribbon>

      <Workspace>
        <RulerRow>
          <TabStop>
            <TabGlyph width="7" height="7" viewBox="0 0 7 7">
              <path d="M0 0h2v5h5v2H0z" fill="#666" />
            </TabGlyph>
          </TabStop>
          <HRuler />
          <Indent width="10" height="23" viewBox="0 0 10 23" fill="#fff" stroke="#777">
            <path d="M.5.500h9v2L5 7 .5 2.500zM.5 13L5 8l4.500 5v2h-9zM.5 16h9v6.500h-9z" />
          </Indent>
        </RulerRow>
        <DeskRow>
          <SideRuler>
            <VRuler />
          </SideRuler>
          <Page>
            <Para $lh={28} $top={-10}>
              <Line>Quando os microgametas estão localizados</Line>
              <Line $ws={4.5}>e eles são liberados na luz do intestino</Line>
              <Line $ws={4.5}>
                singamia, com <Typo>fomação</Typo> de um zigoto
              </Line>
              <Line>eliminado para o ambiente junto com</Line>
            </Para>
            <Heading $top={30}>
              {'5.1.1.1  Familia '}
              <Typo>Eimeriida</Typo>
            </Heading>
            <Para $lh={19.75} $top={10}>
              <Line>Os gêneros dessa familia são diferenciados</Line>
              <Line>em cada oocisto e no número de esporozoítos</Line>
              <Line $ws={3}>intracelulares e a maioria sofre</Line>
              <Line $ws={3}>hospedeiros. O ciclo biológico de</Line>
              <Line>hospedeiro (heteróxenos).</Line>
            </Para>
            <ListItem $top={39}>
              <Redact />
              <Typo>Eimeria</Typo>
              {' sp.'}
            </ListItem>
            <ListItem $top={20}>
              <Redact />
              <Typo>Cystoisospora</Typo>
              {' sp.'}
            </ListItem>
            <Caret />
            <Heading $top={11}>
              {'5.1.1.2  Família '}
              <Typo>Cryptosporidiidae</Typo>
            </Heading>
          </Page>
        </DeskRow>
      </Workspace>

      <Gallery>
        <StyleGrid>
          {styles.map((s, i) => (
            <StyleCell key={i} $selected={s.mark}>
              <Preview {...s.p}>
                {s.mark && <HeadMark />}
                {s.text}
              </Preview>
              <Caption>{s.name}</Caption>
            </StyleCell>
          ))}
        </StyleGrid>
        <MenuItems>
          <MenuItem>
            <svg width="19" height="18" viewBox="0 0 19 18" fill="none">
              <path d="M1 15L7 1l6 14M3 10h8" stroke="#555" />
              <path d="M15 11v6M12 14h6" stroke="#2e9e4f" />
            </svg>
            <span>
              Criar um <u>E</u>stilo
            </span>
          </MenuItem>
          <MenuItem>
            <EraserA s={19} />
            <span>
              Limpar <u>F</u>ormatação
            </span>
          </MenuItem>
          <MenuItem>
            <svg width="19" height="18" viewBox="0 0 19 18" fill="none">
              <path d="M1 15L7 1l6 14M3 10h8" stroke="#555" />
              <path d="M9 15h9M15 12l3 3-3 3" stroke="#2b88d8" />
            </svg>
            <span>
              <u>A</u>plicar Estilos...
            </span>
          </MenuItem>
          <Grip width="8" height="8" viewBox="0 0 8 8" fill="#9a9a9a">
            <path d="M6 0h2v2H6zM3 3h2v2H3zM6 3h2v2H6zM0 6h2v2H0zM3 6h2v2H3zM6 6h2v2H6z" />
          </Grip>
        </MenuItems>
      </Gallery>
    </Shell>
  )
}
